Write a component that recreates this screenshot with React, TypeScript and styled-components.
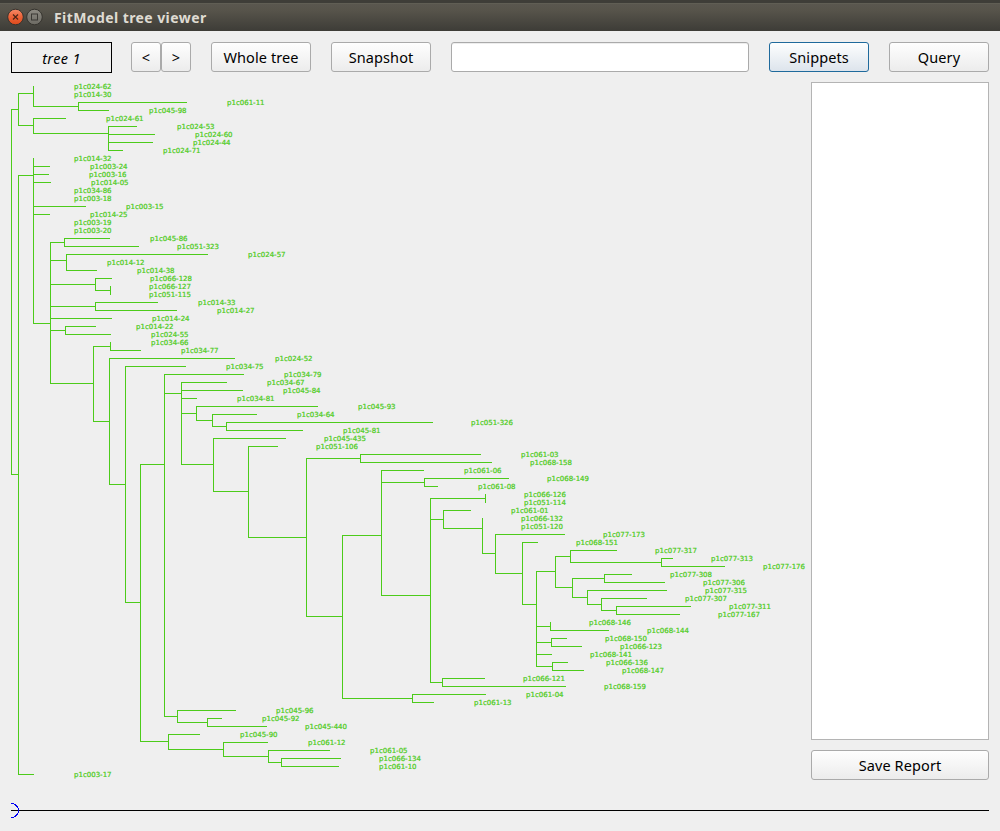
import React from "react";
import styled, { createGlobalStyle, css } from "styled-components";

const GlobalStyle = createGlobalStyle`
  html, body { margin: 0; padding: 0; background: #efefef; }
  * { box-sizing: border-box; }
`;

const uiFont = `"Noto Sans", "Open Sans", sans-serif`;
const branchColor = "#4ccb1a";

const Window = styled.div`
  display: flex;
  flex-direction: column;
  width: 1000px;
  height: 831px;
  overflow: hidden;
  background: #efefef;
  color: #000;
  font-family: ${uiFont};
`;

const TitleBar = styled.header`
  display: flex;
  align-items: center;
  flex: none;
  height: 31px;
  padding: 4px 0 0 7px;
  border-top: 3px solid #3e3d38;
  background: linear-gradient(#66655a 0, #5a574f 1px, #56534a 8px, #3d3c37 100%);
`;

const WindowButtons = styled.svg`
  display: block;
  flex: none;
  margin-top: -4px;
`;

const Title = styled.h1`
  margin: -3px 0 0 10px;
  font-size: 14px;
  line-height: 20px;
  font-weight: 700;
  letter-spacing: 0.42px;
  color: #dfdbd2;
  white-space: nowrap;
`;

const Toolbar = styled.div`
  display: flex;
  align-items: flex-start;
  flex: none;
  height: 51px;
  padding: 11px 11px 0;
`;

const TreeName = styled.div`
  width: 101px;
  height: 31px;
  margin-right: 19px;
  border: 1px solid #000;
  font-size: 14.5px;
  line-height: 30px;
  font-style: italic;
  letter-spacing: 0.35px;
  text-align: center;
`;

const ButtonGroup = styled.div`
  display: flex;
`;

const Button = styled.button<{ $width: number; $gap?: number; $active?: boolean }>`
  flex: none;
  width: ${(p) => p.$width}px;
  height: 30px;
  margin: 0 0 0 ${(p) => p.$gap ?? 0}px;
  padding: 0 0 1px;
  border: 1px solid #aaa;
  border-radius: 3px;
  background: linear-gradient(#fefefe, #ececec);
  color: #000;
  font: 14.5px/26px ${uiFont};
  letter-spacing: 0.1px;
  text-align: center;
  white-space: nowrap;
  ${(p) =>
    p.$active &&
    css`
      border-color: #1f6a9c;
      background: linear-gradient(#fdfefe, #dde4ec);
    `}
`;

const SearchInput = styled.input`
  flex: 1;
  min-width: 0;
  height: 30px;
  margin-left: 20px;
  padding: 0 6px;
  border: 1px solid #aaa;
  border-radius: 3px;
  box-shadow: inset 0 1px 0 #ededed;
  background: #fff;
  font: 14px ${uiFont};
`;

const Content = styled.main`
  display: flex;
  flex: none;
  height: 698px;
  padding-right: 11px;
`;

const TreeCanvas = styled.svg`
  display: block;
  flex: none;
  width: 811px;
  height: 698px;
`;

const Branch = styled.path`
  fill: none;
  stroke: ${branchColor};
  stroke-width: 1px;
  shape-rendering: crispEdges;
`;

const LeafLabel = styled.text`
  font-family: "DejaVu Sans", sans-serif;
  font-size: 7px;
  fill: ${branchColor};
  stroke: ${branchColor};
  stroke-width: 0.22px;
`;

const Sidebar = styled.aside`
  display: flex;
  flex-direction: column;
  gap: 10px;
  width: 178px;
`;

const Report = styled.div`
  height: 658px;
  border: 1px solid #b4b4b4;
  background: #fff;
`;

const Timeline = styled.footer`
  flex: 1;
  padding: 22px 11px 0;
`;

const TimelineTrack = styled.svg`
  display: block;
  width: 978px;
  height: 17px;
`;

type Segment = [number, number, number];

// [y, x from, x to]
const horizontals: Segment[] = [
  [93, 18, 33], [106, 33, 78], [102, 78, 186], [110, 78, 108], [109, 11, 18], [125, 18, 33],
  [118, 33, 65], [133, 33, 108], [126, 108, 136], [134, 108, 154], [142, 108, 152], [150, 108, 122],
  [166, 33, 49], [174, 33, 48], [182, 33, 50], [175, 18, 33], [206, 33, 85], [214, 33, 49],
  [474, 11, 18], [774, 18, 33], [323, 33, 50], [242, 50, 64], [238, 64, 109], [246, 64, 138],
  [260, 50, 66], [254, 66, 207], [270, 66, 96], [284, 50, 95], [278, 95, 111], [290, 95, 110],
  [306, 50, 95], [302, 95, 157], [310, 95, 176], [318, 50, 111], [330, 50, 65], [326, 65, 95],
  [334, 65, 110], [346, 93, 110], [350, 110, 140], [383, 50, 93], [421, 93, 109], [358, 109, 234],
  [484, 109, 125], [366, 125, 185], [602, 125, 140], [464, 140, 164], [374, 164, 243], [393, 164, 181],
  [382, 181, 226], [390, 181, 242], [398, 181, 196], [413, 181, 196], [406, 196, 317], [420, 196, 212],
  [414, 212, 256], [426, 212, 226], [422, 226, 432], [430, 226, 302], [464, 181, 213], [438, 213, 285],
  [491, 213, 248], [446, 248, 277], [537, 248, 306], [458, 306, 360], [454, 360, 480], [462, 360, 491],
  [616, 306, 342], [535, 342, 381], [470, 381, 423], [482, 381, 424], [478, 424, 508], [486, 424, 437],
  [595, 381, 430], [498, 430, 485], [519, 430, 443], [510, 443, 470], [528, 443, 482], [553, 482, 495],
  [534, 495, 564], [573, 495, 522], [542, 522, 537], [604, 522, 536], [571, 536, 555], [556, 555, 570],
  [550, 570, 616], [562, 570, 661], [558, 661, 672], [566, 661, 724], [587, 555, 572], [578, 572, 604],
  [574, 604, 631], [582, 604, 664], [597, 572, 587], [590, 587, 666], [604, 587, 601], [598, 601, 646],
  [610, 601, 616], [606, 616, 690], [614, 616, 679], [626, 536, 550], [630, 550, 608], [642, 536, 551],
  [638, 551, 566], [646, 551, 581], [654, 536, 551], [666, 536, 552], [662, 552, 567], [670, 552, 583],
  [682, 430, 442], [678, 442, 484], [686, 442, 565], [698, 342, 412], [694, 412, 485], [702, 412, 433],
  [716, 164, 177], [710, 177, 235], [722, 177, 207], [718, 207, 221], [726, 207, 266], [741, 140, 168],
  [734, 168, 199], [749, 168, 223], [742, 223, 267], [756, 223, 268], [750, 268, 329], [762, 268, 281],
  [758, 281, 340], [766, 281, 338],
];

// [x, y from, y to]
const verticals: Segment[] = [
  [33, 86, 106], [18, 93, 125], [11, 109, 474], [78, 102, 110], [33, 118, 133], [108, 126, 150],
  [33, 158, 323], [18, 175, 774], [50, 242, 383], [64, 238, 246], [66, 254, 270], [95, 278, 290],
  [110, 286, 294], [95, 302, 310], [65, 326, 334], [110, 342, 350], [93, 346, 421], [109, 358, 484],
  [125, 366, 602], [140, 464, 741], [164, 374, 716], [181, 382, 464], [196, 406, 420], [212, 414, 426],
  [226, 422, 430], [213, 438, 491], [248, 446, 537], [306, 458, 616], [360, 454, 462], [342, 535, 698],
  [381, 470, 595], [424, 478, 486], [430, 498, 682], [485, 494, 502], [443, 510, 528], [482, 518, 553],
  [495, 534, 573], [522, 542, 604], [536, 571, 666], [555, 556, 587], [570, 550, 562], [661, 558, 566],
  [572, 578, 597], [604, 574, 582], [587, 590, 604], [601, 598, 610], [616, 606, 614], [550, 622, 630],
  [551, 638, 646], [552, 662, 670], [442, 678, 686], [412, 694, 702], [177, 710, 722], [207, 718, 726],
  [168, 734, 749], [223, 742, 756], [268, 750, 762], [281, 758, 766],
];

// One leaf per 8px row, top to bottom: [label, x]
const leaves: [string, number][] = [
  ["024-62", 74], ["014-30", 74], ["061-11", 227], ["045-98", 149], ["024-61", 106], ["024-53", 177],
  ["024-60", 195], ["024-44", 193], ["024-71", 163], ["014-32", 74], ["003-24", 90], ["003-16", 89],
  ["014-05", 91], ["034-86", 74], ["003-18", 74], ["003-15", 126], ["014-25", 90], ["003-19", 74],
  ["003-20", 74], ["045-86", 150], ["051-323", 177], ["024-57", 248], ["014-12", 107], ["014-38", 137],
  ["066-128", 150], ["066-127", 149], ["051-115", 149], ["014-33", 198], ["014-27", 217], ["014-24", 152],
  ["014-22", 136], ["024-55", 151], ["034-66", 151], ["034-77", 181], ["024-52", 275], ["034-75", 226],
  ["034-79", 284], ["034-67", 267], ["045-84", 283], ["034-81", 237], ["045-93", 358], ["034-64", 297],
  ["051-326", 471], ["045-81", 343], ["045-435", 324], ["051-106", 316], ["061-03", 521], ["068-158", 530],
  ["061-06", 464], ["068-149", 547], ["061-08", 478], ["066-126", 524], ["051-114", 524], ["061-01", 511],
  ["066-132", 521], ["051-120", 521], ["077-173", 603], ["068-151", 576], ["077-317", 655], ["077-313", 711],
  ["077-176", 763], ["077-308", 670], ["077-306", 703], ["077-315", 705], ["077-307", 685], ["077-311", 729],
  ["077-167", 718], ["068-146", 589], ["068-144", 647], ["068-150", 605], ["066-123", 620], ["068-141", 590],
  ["066-136", 606], ["068-147", 622], ["066-121", 523], ["068-159", 604], ["061-04", 526], ["061-13", 474],
  ["045-96", 276], ["045-92", 262], ["045-440", 305], ["045-90", 240], ["061-12", 308], ["061-05", 370],
  ["066-134", 379], ["061-10", 379], ["003-17", 74],
];

const branchPath = [
  ...horizontals.map(([y, a, b]) => `M${a} ${y + 0.5}H${b + 1}`),
  ...verticals.map(([x, a, b]) => `M${x + 0.5} ${a}V${b + 1}`),
].join("");

function Tree() {
  return (
    <TreeCanvas viewBox="0 82 811 698">
      <Branch d={branchPath} />
      {leaves.map(([name, x], row) => (
        <LeafLabel key={name} x={x} y={89 + row * 8}>
          {`p1c${name}`}
        </LeafLabel>
      ))}
    </TreeCanvas>
  );
}

export default function App() {
  return (
    <Window>
      <GlobalStyle />
      <TitleBar>
        <WindowButtons width="37" height="18" viewBox="0 0 37 18">
          <defs>
            <linearGradient id="close" x1="0" y1="0" x2="0" y2="1">
              <stop offset="0" stopColor="#f58a68" />
              <stop offset="0.5" stopColor="#ec6237" />
              <stop offset="1" stopColor="#dc4a1c" />
            </linearGradient>
            <linearGradient id="maximize" x1="0" y1="0" x2="0" y2="1">
              <stop offset="0" stopColor="#8d8a82" />
              <stop offset="1" stopColor="#6c6a63" />
            </linearGradient>
          </defs>
          <circle cx="8.5" cy="9" r="7.8" fill="url(#close)" stroke="#35332e" />
          <path d="M6 6.5l5 5M11 6.5l-5 5" stroke="#4b2416" strokeWidth="1.2" />
          <circle cx="27.5" cy="9" r="7.8" fill="url(#maximize)" stroke="#35332e" />
          <rect x="24.5" y="6" width="6" height="6" fill="none" stroke="#3b3934" />
        </WindowButtons>
        <Title>FitModel tree viewer</Title>
      </TitleBar>
      <Toolbar>
        <TreeName>tree 1</TreeName>
        <ButtonGroup>
          <Button $width={30}>&lt;</Button>
          <Button $width={30}>&gt;</Button>
        </ButtonGroup>
        <Button $width={100} $gap={20}>Whole tree</Button>
        <Button $width={100} $gap={20}>Snapshot</Button>
        <SearchInput />
        <Button $width={100} $gap={20} $active>Snippets</Button>
        <Button $width={100} $gap={20}>Query</Button>
      </Toolbar>
      <Content>
        <Tree />
        <Sidebar>
          <Report />
          <Button $width={178}>Save Report</Button>
        </Sidebar>
      </Content>
      <Timeline>
        <TimelineTrack viewBox="0 0 978 17" shapeRendering="crispEdges">
          <path d="M0 8.5H978" stroke="#000" />
          <path d="M0 1.5A7.5 7 0 0 1 0 15.5" fill="none" stroke="#0000f0" />
        </TimelineTrack>
      </Timeline>
    </Window>
  );
}
